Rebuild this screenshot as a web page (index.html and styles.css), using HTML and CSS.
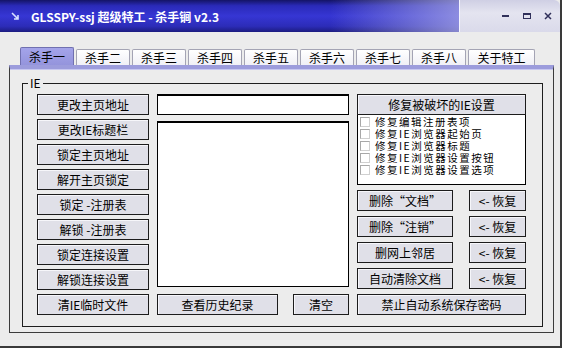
FILE: index.html
```html
<!DOCTYPE html>
<html lang="zh-CN">
<head>
  <meta charset="UTF-8">
  <title>GLSSPY-ssj 超级特工 - 杀手锏 v2.3</title>
  <link rel="stylesheet" href="styles.css">
</head>
<body>
  <div class="window">
    <!-- Title bar -->
    <div class="titlebar">
      <div class="caption">
        <svg class="app-icon" width="8" height="8" viewBox="0 0 8 8">
          <path d="M1 1 L7 7 M7 3 L7 7 L3 7" stroke="#d8e0ff" stroke-width="1.6" fill="none"/>
        </svg>
        <span class="title">GLSSPY-ssj 超级特工 - 杀手锏 v2.3</span>
      </div>
      <div class="caption-buttons">
        <svg width="8" height="8" viewBox="0 0 8 8"><rect x="0" y="3" width="7" height="2" fill="#30305a"/></svg>
        <svg width="8" height="8" viewBox="0 0 8 8"><rect x="0.5" y="1.5" width="7" height="5" stroke="#30305a" fill="none"/><rect x="0" y="1" width="8" height="2" fill="#30305a"/></svg>
        <svg width="8" height="8" viewBox="0 0 8 8"><path d="M1 1 L7 7 M7 1 L1 7" stroke="#30305a" stroke-width="1.5"/></svg>
      </div>
    </div>

    <div class="client">
      <div class="tabs">
        <div class="tab active">杀手一</div>
        <div class="tab">杀手二</div>
        <div class="tab">杀手三</div>
        <div class="tab">杀手四</div>
        <div class="tab">杀手五</div>
        <div class="tab">杀手六</div>
        <div class="tab">杀手七</div>
        <div class="tab">杀手八</div>
        <div class="tab wide">关于特工</div>
      </div>

      <div class="panel">
        <div class="group">
          <span class="group-label">IE</span>

          <!-- Left column -->
          <div class="col col-left">
            <div class="btn">更改主页地址</div>
            <div class="btn">更改IE标题栏</div>
            <div class="btn">锁定主页地址</div>
            <div class="btn">解开主页锁定</div>
            <div class="btn">锁定 -注册表</div>
            <div class="btn">解锁 -注册表</div>
            <div class="btn">锁定连接设置</div>
            <div class="btn">解锁连接设置</div>
            <div class="btn">清IE临时文件</div>
          </div>

          <!-- Middle column -->
          <div class="col col-mid">
            <div class="field"></div>
            <div class="memo"></div>
            <div class="row">
              <div class="btn btn-history">查看历史纪录</div>
              <div class="btn btn-clear">清空</div>
            </div>
          </div>

          <!-- Right column -->
          <div class="col col-right">
            <div class="btn btn-repair">修复被破坏的IE设置</div>
            <div class="checklist">
              <div class="check"><span class="box"></span>修复编辑注册表项</div>
              <div class="check"><span class="box"></span>修复IE浏览器起始页</div>
              <div class="check"><span class="box"></span>修复IE浏览器标题</div>
              <div class="check"><span class="box"></span>修复IE浏览器设置按钮</div>
              <div class="check"><span class="box"></span>修复IE浏览器设置选项</div>
            </div>
            <div class="pair-rows">
              <div class="row spread">
                <div class="btn btn-del">删除“文档”</div>
                <div class="btn btn-undo">&lt;- 恢复</div>
              </div>
              <div class="row spread">
                <div class="btn btn-del">删除“注销”</div>
                <div class="btn btn-undo">&lt;- 恢复</div>
              </div>
              <div class="row spread">
                <div class="btn btn-del">删网上邻居</div>
                <div class="btn btn-undo">&lt;- 恢复</div>
              </div>
              <div class="row spread">
                <div class="btn btn-del">自动清除文档</div>
                <div class="btn btn-undo">&lt;- 恢复</div>
              </div>
              <div class="btn">禁止自动系统保存密码</div>
            </div>
          </div>
        </div>
      </div>
    </div>
  </div>
</body>
</html>
```

FILE: styles.css
```css
* {
  margin: 0;
  padding: 0;
  box-sizing: border-box;
}

body {
  font-family: "Noto Sans CJK SC", "Liberation Sans", sans-serif;
  font-size: 12px;
  color: #000;
  background: #ececec;
}

.window {
  width: 562px;
  height: 348px;
  background: #ececec;
  border-right: 2px solid #3a3a3a;
  border-bottom: 2px solid #3a3a3a;
  overflow: hidden;
}

/* title bar */
.titlebar {
  display: flex;
  height: 32px;
}

.caption {
  flex: 1;
  display: flex;
  align-items: center;
  gap: 12px;
  padding-left: 11px;
  background:
    linear-gradient(to right, rgba(255,255,255,0) 72%, rgba(170,170,230,0.75) 100%),
    linear-gradient(to bottom, #141466 0, #2a2ab8 18%, #3636d4 50%, #2c2cb8 82%, #1c1c80 100%);
  border-right: 1px solid #f4f4ff;
}

.title {
  color: #fff;
  font-weight: bold;
  font-size: 12px;
  white-space: pre;
  padding-top: 1px;
}

.caption-buttons {
  width: 100px;
  display: flex;
  align-items: center;
  gap: 13px;
  padding-left: 42px;
  background: linear-gradient(to bottom, #cfcfe4, #e4e4f0 40%, #dadaea);
  border-top-right-radius: 6px;
}

/* client area */
.client {
  padding: 15px 0 0 9px;
}

.tabs {
  display: flex;
  align-items: flex-end;
  gap: 2px;
  height: 18px;
  margin-left: 11px;
}

.tab {
  width: 54px;
  height: 16px;
  line-height: 15px;
  text-align: center;
  background: linear-gradient(to bottom, #ffffff, #f0f0f6);
  border: 1px solid #a4a4b4;
  border-bottom: none;
  border-radius: 2px 2px 0 0;
}

.tab.wide {
  width: 67px;
}

.tab.active {
  height: 18px;
  line-height: 17px;
  background: linear-gradient(to bottom, #a4a4ea, #9494dc);
  border-color: #7070b0;
}

.panel {
  width: 545px;
  height: 268px;
  border: 1px solid #3c3c3c;
  border-top: 4px solid #9c9cdc;
  box-shadow: inset 0 1px 0 #c8c8f0;
  padding: 14px 10px 5px 12px;
}

/* group box */
.group {
  position: relative;
  height: 100%;
  border: 1px solid #1e1e1e;
  display: flex;
  gap: 8px;
  padding: 10px 0 0 14px;
}

.group-label {
  position: absolute;
  top: -8px;
  left: 5px;
  padding: 0 2px;
  background: #ececec;
  line-height: 14px;
}

.col {
  display: flex;
  flex-direction: column;
}

.col-left {
  width: 112px;
  gap: 4px;
}

.col-mid {
  width: 192px;
}

.col-right {
  width: 169px;
}

.btn {
  height: 21px;
  line-height: 19px;
  text-align: center;
  white-space: nowrap;
  background: #e0e0e8;
  border: 1px solid #1c1c1c;
  box-shadow: inset 1px 1px 0 #f6f6fa;
}

.field {
  height: 21px;
  background: #fff;
  border: 1px solid #000;
  border-top-width: 2px;
}

.memo {
  height: 166px;
  margin: 6px 0 7px;
  background: #fff;
  border: 1px solid #000;
  border-top-width: 2px;
}

.row {
  display: flex;
  justify-content: space-between;
}

.btn-history {
  width: 121px;
}

.btn-clear {
  width: 56px;
}

.checklist {
  height: 70px;
  background: #fff;
  border: 1px solid #000;
  border-top: none;
  padding: 1px 0 0 2px;
}

.check {
  display: flex;
  align-items: center;
  gap: 5px;
  height: 12px;
  font-size: 10.5px;
  letter-spacing: 1.5px;
  line-height: 12px;
  white-space: nowrap;
}

.box {
  width: 10px;
  height: 10px;
  border: 1px solid #a8a8a8;
  border-right-color: #d0d0d0;
  border-bottom-color: #d0d0d0;
  background: #fff;
}

.pair-rows {
  display: flex;
  flex-direction: column;
  gap: 5px;
  margin-top: 5px;
}

.btn-del {
  width: 96px;
}

.btn-undo {
  width: 57px;
}
```
